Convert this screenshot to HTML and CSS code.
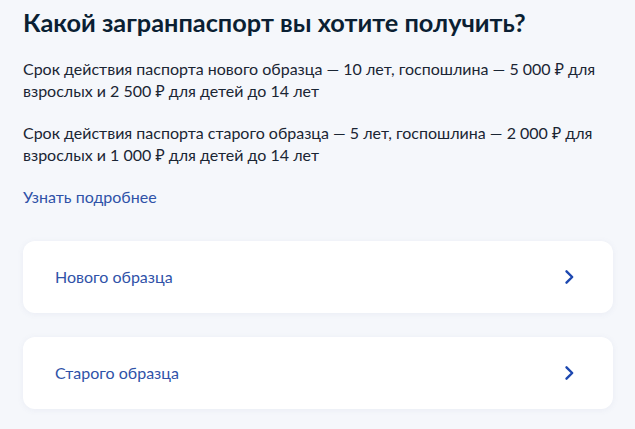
FILE: index.html
```html
<!DOCTYPE html>
<html lang="ru">
<head>
<meta charset="utf-8">
<title>Загранпаспорт</title>
<link rel="stylesheet" href="styles.css">
</head>
<body>
<main class="page">
  <h1 class="title">Какой загранпаспорт вы хотите получить?</h1>
  <p class="text">Срок действия паспорта нового образца — 10 лет, госпошлина — 5&nbsp;000&nbsp;₽ для взрослых и 2&nbsp;500&nbsp;₽ для детей до 14 лет</p>
  <p class="text">Срок действия паспорта старого образца — 5 лет, госпошлина — 2&nbsp;000&nbsp;₽ для взрослых и 1&nbsp;000&nbsp;₽ для детей до 14 лет</p>
  <a class="more" href="#">Узнать подробнее</a>
  <div class="options">
    <a class="option" href="#">
      <span class="option-label">Нового образца</span>
      <svg class="chevron" viewBox="0 0 24 24" width="24" height="24" aria-hidden="true"><path d="M9.5 6.3L15.2 12l-5.7 5.7" fill="none" stroke="#1d48b0" stroke-width="2.4" stroke-linecap="round" stroke-linejoin="round"/></svg>
    </a>
    <a class="option" href="#">
      <span class="option-label">Старого образца</span>
      <svg class="chevron" viewBox="0 0 24 24" width="24" height="24" aria-hidden="true"><path d="M9.5 6.3L15.2 12l-5.7 5.7" fill="none" stroke="#1d48b0" stroke-width="2.4" stroke-linecap="round" stroke-linejoin="round"/></svg>
    </a>
  </div>
</main>
</body>
</html>
```

FILE: styles.css
```css
html, body {
  margin: 0;
  padding: 0;
  background: #f5f7fb;
}
body {
  font-family: Lato, "Noto Sans", sans-serif;
  color: #0b1f33;
}
.page {
  padding: 6px 22px 20px 23px;
  display: flex;
  flex-direction: column;
}
.title {
  margin: 0 0 20px;
  font-size: 25.3px;
  line-height: 32px;
  font-weight: 700;
  color: #0b1f33;
}
.text {
  margin: 0 0 20px;
  font-size: 16px;
  line-height: 22px;
  color: #1a2533;
}
.more {
  align-self: flex-start;
  font-size: 16px;
  line-height: 22px;
  color: #2f52a8;
  text-decoration: none;
}
.options {
  margin-top: 33px;
  display: flex;
  flex-direction: column;
  gap: 24px;
}
.option {
  display: flex;
  align-items: center;
  justify-content: space-between;
  height: 72px;
  box-sizing: border-box;
  padding: 0 32px;
  background: #ffffff;
  border-radius: 12px;
  box-shadow: 0 1px 6px rgba(100, 120, 160, 0.08);
  text-decoration: none;
}
.option-label {
  font-size: 16px;
  line-height: 22px;
  color: #2f52a8;
}
.chevron {
  display: block;
  flex: none;
}
```
